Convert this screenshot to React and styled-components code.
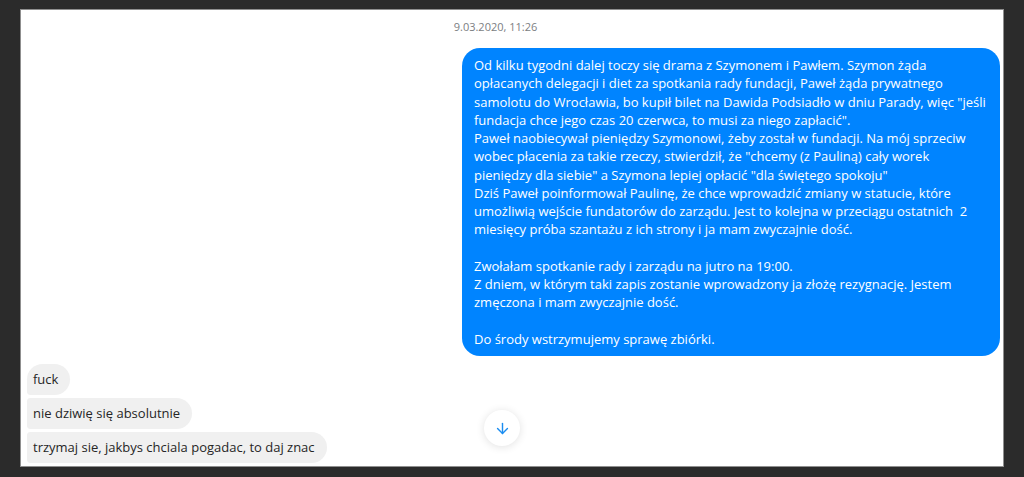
import React from "react";
import styled, { createGlobalStyle } from "styled-components";
import { ArrowDown } from "lucide-react";

const Global = createGlobalStyle`
  html, body {
    margin: 0;
    padding: 0;
    background: #2b2b2b;
  }
  body {
    font-family: "Open Sans", "Noto Sans", sans-serif;
  }
`;

const Page = styled.div`
  box-sizing: border-box;
  width: 1024px;
  height: 477px;
  padding: 9px 20px 10px 20px;
  background: #2b2b2b;
`;

const Panel = styled.div`
  position: relative;
  box-sizing: border-box;
  height: 100%;
  width: 984px;
  background: #fff;
  border: 1px solid #8f8f8f;
  overflow: hidden;
  display: flex;
  flex-direction: column;

  & > * {
    flex-shrink: 0;
  }
`;

const Stamp = styled.div`
  text-align: center;
  font-size: 11px;
  line-height: 15px;
  color: #7b7e82;
  padding: 9px 0 0 0;
  margin-left: -33px;
  height: 38px;
  box-sizing: border-box;
`;

const OutRow = styled.div`
  display: flex;
  justify-content: flex-end;
  padding-right: 3px;
`;

const OutBubble = styled.div`
  box-sizing: border-box;
  width: 538px;
  background: #0084ff;
  color: #fff;
  border-radius: 18px;
  padding: 8px 6px 8px 12px;
  font-size: 13px;
  line-height: 18.27px;
  white-space: pre;
`;

const Group = styled.div`
  display: flex;
  flex-direction: column;
  align-items: flex-start;
  gap: 3px;
  margin-top: 8px;
  padding-left: 6px;
`;

const InBubble = styled.div`
  box-sizing: border-box;
  background: #f0f0f0;
  color: #262626;
  font-size: 13px;
  line-height: 15px;
  padding: 8px 12px 8px 6px;
  min-height: 31px;
  min-width: ${(p) => p.$minWidth || 0}px;
  white-space: nowrap;
  border-radius: ${(p) =>
    p.$first ? "18px 18px 18px 4px" : "4px 18px 18px 4px"};
`;

const ScrollButton = styled.button`
  position: absolute;
  left: 463px;
  top: 400px;
  width: 36px;
  height: 36px;
  border-radius: 50%;
  border: none;
  background: #fff;
  box-shadow: 0 1px 8px rgba(0, 0, 0, 0.12);
  display: flex;
  align-items: center;
  justify-content: center;
  color: #1a8cf0;
  padding: 0;
`;

const lines = [
  "Od kilku tygodni dalej toczy się drama z Szymonem i Pawłem. Szymon żąda",
  "opłacanych delegacji i diet za spotkania rady fundacji, Paweł żąda prywatnego",
  'samolotu do Wrocławia, bo kupił bilet na Dawida Podsiadło w dniu Parady, więc "jeśli',
  'fundacja chce jego czas 20 czerwca, to musi za niego zapłacić".',
  "Paweł naobiecywał pieniędzy Szymonowi, żeby został w fundacji. Na mój sprzeciw",
  'wobec płacenia za takie rzeczy, stwierdził, że "chcemy (z Pauliną) cały worek',
  'pieniędzy dla siebie" a Szymona lepiej opłacić "dla świętego spokoju"',
  "Dziś Paweł poinformował Paulinę, że chce wprowadzić zmiany w statucie, które",
  "umożliwią wejście fundatorów do zarządu. Jest to kolejna w przeciągu ostatnich  2",
  "miesięcy próba szantażu z ich strony i ja mam zwyczajnie dość.",
  "",
  "Zwołałam spotkanie rady i zarządu na jutro na 19:00.",
  "Z dniem, w którym taki zapis zostanie wprowadzony ja złożę rezygnację. Jestem",
  "zmęczona i mam zwyczajnie dość.",
  "",
  "Do środy wstrzymujemy sprawę zbiórki.",
];

export default function App() {
  return (
    <>
      <Global />
      <Page>
        <Panel>
          <Stamp>9.03.2020, 11:26</Stamp>
          <OutRow>
            <OutBubble>{lines.join("\n")}</OutBubble>
          </OutRow>
          <Group>
            <InBubble $first>fuck</InBubble>
            <InBubble>nie dziwię się absolutnie</InBubble>
            <InBubble>trzymaj sie, jakbys chciala pogadac, to daj znac</InBubble>
            <InBubble $minWidth={156}>&nbsp;</InBubble>
          </Group>
          <ScrollButton aria-label="Przewiń w dół">
            <ArrowDown size={17} strokeWidth={2} />
          </ScrollButton>
        </Panel>
      </Page>
    </>
  );
}
